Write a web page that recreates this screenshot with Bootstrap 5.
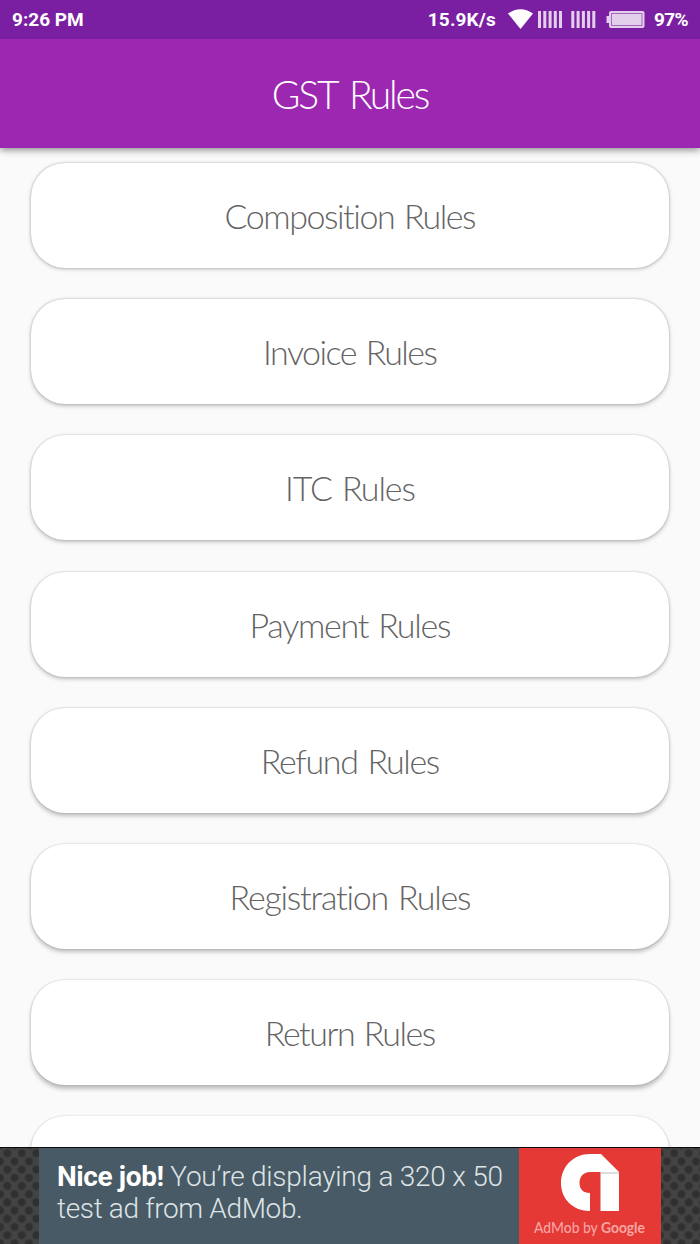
<!DOCTYPE html>
<html lang="en">
<head>
<meta charset="utf-8">
<meta name="viewport" content="width=device-width, initial-scale=1">
<title>GST Rules</title>
<link href="https://cdn.jsdelivr.net/npm/bootstrap@5.3.0/dist/css/bootstrap.min.css" rel="stylesheet">
<style>
  body { background: #fafafa; font-family: Roboto, sans-serif; }
  .status-bar { height: 39px; background: #7b1fa2; font-size: 19px; font-weight: 700; line-height: 39px; padding: 0 12px; z-index: 3; }
  .net-speed { letter-spacing: .15px; }
  .battery-level { letter-spacing: -.6px; }
  .app-bar { height: 109px; background: #9c27b0; box-shadow: 0 2px 7px rgba(0,0,0,.45); z-index: 2; padding-top: 2px; }
  .app-bar h1, .rule-item { font-family: Lato, sans-serif; font-weight: 300; }
  .app-bar h1 { font-size: 39px; line-height: 1; white-space: nowrap; letter-spacing: -2.1px; word-spacing: 4px; }
  .rules { gap: 31.1px; padding: 15.300px 31px 0; }
  .rule-item { height: 105px; border-radius: 34px; color: #646464; font-size: 34px; line-height: 1; padding-top: 1px;
    box-shadow: 0 0 2px rgba(0,0,0,.22), 0 var(--drop) 4px rgba(0,0,0,.24); }
  .rule-item span { letter-spacing: var(--ls, 0); word-spacing: 2px; margin-right: calc(-1 * var(--ls, 0px) - 1px); white-space: nowrap; font-variant-ligatures: none; }
  .ad-strip { height: 97px; z-index: 4; border-top: 1px solid #0b0b0b;
    background-color: #444;
    background-image: radial-gradient(circle, #303030 0 3px, transparent 5px), radial-gradient(circle, #303030 0 3px, transparent 5px);
    background-size: 14.5px 16.4px; background-position: 0 -3px, 7.25px 5.2px; }
  .ad-copy { width: 480px; margin-left: 39px; background: #475a65; color: #dfe4e7; font-size: 28px; font-weight: 300; line-height: 32px; padding: 13px 0 0 18px; letter-spacing: -.24px; }
  .ad-copy b { font-weight: 700; color: #fff; letter-spacing: -.4px; }
  .ad-copy span { white-space: nowrap; }
  .ad-copy .second-line { letter-spacing: -.34px; }
  .ad-logo { width: 142px; background: #e53935; }
</style>
</head>
<body class="vh-100 overflow-hidden d-flex flex-column">
  <header class="status-bar d-flex align-items-center text-white position-relative flex-shrink-0">
    <span>9:26 PM</span>
    <span class="net-speed ms-auto">15.9K/s</span>
    <svg class="ms-2" width="150" height="39" viewBox="504 0 150 39" aria-hidden="true">
      <path d="M508 13.500Q520.500 5 533 13.500L520.500 29Z" fill="#fff"/>
      <g fill="#e3cfeb">
        <path d="M538 11h3v17h-3zM543.300 11h3v17h-3zM548.600 11h3v17h-3zM553.800 11h3v17h-3zM559 11h3v17h-3z"/>
        <path d="M571.300 11h3v17h-3zM576.600 11h3v17h-3zM581.900 11h3v17h-3zM587.100 11h3v17h-3zM592.300 11h3v17h-3z"/>
        <path d="M606.500 16h3v7h-3z"/>
        <rect x="609" y="11" width="35.500" height="17" rx="2"/>
      </g>
      <rect x="611.500" y="13.500" width="30.500" height="12" fill="none" stroke="#a56abd" stroke-width="1"/>
    </svg>
    <span class="battery-level">97%</span>
  </header>
  <nav class="app-bar d-flex align-items-center justify-content-center text-white position-relative flex-shrink-0">
    <h1 class="m-0">GST Rules</h1>
  </nav>
  <main class="rules d-flex flex-column flex-grow-1 overflow-hidden">
    <div class="rule-item bg-white d-flex align-items-center justify-content-center flex-shrink-0" style="--drop:1px;--ls:-1.45px"><span>Composition Rules</span></div>
    <div class="rule-item bg-white d-flex align-items-center justify-content-center flex-shrink-0" style="--drop:1.5px;--ls:-1.5px"><span>Invoice Rules</span></div>
    <div class="rule-item bg-white d-flex align-items-center justify-content-center flex-shrink-0" style="--drop:2px;--ls:-1.1px"><span>ITC Rules</span></div>
    <div class="rule-item bg-white d-flex align-items-center justify-content-center flex-shrink-0" style="--drop:2px;--ls:-1.25px"><span>Payment Rules</span></div>
    <div class="rule-item bg-white d-flex align-items-center justify-content-center flex-shrink-0" style="--drop:2.5px;--ls:-1.35px"><span>Refund Rules</span></div>
    <div class="rule-item bg-white d-flex align-items-center justify-content-center flex-shrink-0" style="--drop:3px;--ls:-1.22px"><span>Registration Rules</span></div>
    <div class="rule-item bg-white d-flex align-items-center justify-content-center flex-shrink-0" style="--drop:3.5px;--ls:-1.5px"><span>Return Rules</span></div>
    <div class="rule-item bg-white flex-shrink-0" style="--drop:4px"></div>
  </main>
  <footer class="ad-strip d-flex position-relative flex-shrink-0">
    <div class="ad-copy"><span><b>Nice job!</b> You’re displaying a 320 x 50</span><br><span class="second-line">test ad from AdMob.</span></div>
    <div class="ad-logo">
      <svg class="d-block" width="142" height="96" viewBox="519 1148 142 96" role="img" aria-label="AdMob by Google">
        <path d="M601 1154H590C573 1154 561 1167 561 1183S573 1211 590 1211V1193C583 1193 579.500 1189 579.500 1183S583 1172 590 1172H600.500V1211H619V1172Z" fill="#fff"/>
        <path d="M601 1172H619V1174H601Z" fill="#ddd"/>
        <text x="534" y="1233" textLength="111" lengthAdjust="spacingAndGlyphs" font-family="Lato, sans-serif" font-size="14.500" font-weight="500" fill="#f5a5a3">AdMob by <tspan font-weight="700">Google</tspan></text>
      </svg>
    </div>
  </footer>
<script src="https://cdn.jsdelivr.net/npm/bootstrap@5.3.0/dist/js/bootstrap.bundle.min.js"></script>
</body>
</html>
